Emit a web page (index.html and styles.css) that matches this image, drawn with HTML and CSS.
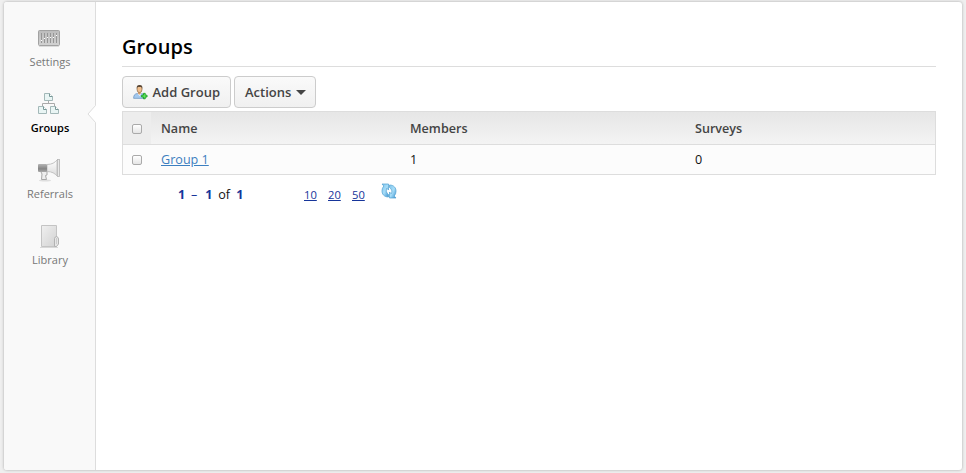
FILE: index.html
```html
<!DOCTYPE html>
<html lang="en">
<head>
<meta charset="utf-8">
<title>Groups</title>
<link rel="stylesheet" href="styles.css">
</head>
<body>
<div class="panel">
  <nav class="sidebar">
    <a class="nav-item">
      <svg width="24" height="24" viewBox="0 0 24 24">
        <defs><linearGradient id="g1" x1="0" y1="0" x2="0" y2="1"><stop offset="0" stop-color="#bcbcbc"/><stop offset="1" stop-color="#d2d2d2"/></linearGradient></defs>
        <rect x="1.500" y="4.500" width="21" height="15" rx="1" fill="url(#g1)" stroke="#a2a2a2"/>
        <path d="M2 20.500h20" stroke="#dcdcdc"/>
        <path d="M4.500 7v10M7.500 7v10M10.500 7v10M13.500 7v10M16.500 7v10M19.500 7v10" stroke="#969696"/>
        <path d="M4 14.500h1M7 12.500h1M10 11.500h1M13 11.500h1M16 11.500h1M19 9.500h1" stroke="#fff"/>
      </svg>
      <span>Settings</span>
    </a>
    <a class="nav-item active">
      <svg width="24" height="24" viewBox="0 0 24 24">
        <path d="M11.500 9v3M5.500 14.500v-3h12v3" fill="none" stroke="#aaa"/>
        <g fill="#e9f5f4" stroke="#a3b8b8">
          <path d="M7.500 1.500h5l3 3v4h-8zM1.500 14.500h5l3 3v4h-8zM13.500 14.500h5l3 3v4h-8z"/>
          <path d="M12.500 1.500v3h3M6.500 14.500v3h3M18.500 14.500v3h3" fill="#fff" stroke="#789898"/>
        </g>
      </svg>
      <span>Groups</span>
    </a>
    <a class="nav-item">
      <svg width="24" height="24" viewBox="0 0 24 24">
        <defs>
          <linearGradient id="g2" x1="0" y1="0" x2="0" y2="1"><stop offset="0" stop-color="#b5b5b5"/><stop offset=".6" stop-color="#858585"/><stop offset="1" stop-color="#aaa"/></linearGradient>
          <linearGradient id="g3" x1="0" y1="0" x2="0" y2="1"><stop offset="0" stop-color="#fff"/><stop offset="1" stop-color="#dadada"/></linearGradient>
        </defs>
        <ellipse cx="8" cy="22.500" rx="6" ry="1" fill="#dedede"/>
        <path d="M3.500 13l1.500 3-.5 5.500h5l-1-4 1.500-.5v-4z" fill="#eee" stroke="#a8a8a8"/>
        <path d="M10 6.500c5 0 8-2 10-4.500v16c-2-2.500-5-4.500-10-4.500z" fill="url(#g3)" stroke="#c2c2c2"/>
        <rect x="1" y="6" width="9" height="8" rx="1" fill="url(#g2)"/>
        <rect x="20.500" y="1.500" width="2" height="17" fill="#e8e8e8" stroke="#b5b5b5" stroke-width=".8"/>
      </svg>
      <span>Referrals</span>
    </a>
    <a class="nav-item">
      <svg width="24" height="24" viewBox="0 0 24 24">
        <defs><linearGradient id="g4" x1="0" y1="0" x2="1" y2="1"><stop offset="0" stop-color="#f0f0f0"/><stop offset="1" stop-color="#d2d2d2"/></linearGradient></defs>
        <path d="M3 23.500h18" stroke="#d8d8d8"/>
        <path d="M4.500 1.500h15v21h-15z" fill="url(#g4)" stroke="#c4c4c4"/>
        <path d="M17.500 22.500v-8q.5-2 2-2 2 .5 2 2.500v5l-2 2.500z" fill="#e6e6e6" stroke="#b2b2b2"/>
        <path d="M19.500 14v6" stroke="#ccc"/>
      </svg>
      <span>Library</span>
    </a>
    <svg class="notch" width="9" height="18" viewBox="0 0 9 18"><path d="M9 0L1 9l8 9z" fill="#fff"/><path d="M8.500.5L1 9l7.500 8.500" fill="none" stroke="#ddd"/></svg>
  </nav>
  <main class="content">
    <h1>Groups</h1>
    <div class="toolbar">
      <button class="btn add">
        <svg width="16" height="16" viewBox="0 0 16 16">
          <path d="M.7 15c0-3.500 1.300-5 4-5.300h5c2.300.5 3.300 2 3.300 5.300z" fill="#a3c8ee" stroke="#6590bf" stroke-width=".8"/>
          <path d="M5 9.500l2 3 2.500-3z" fill="#f5faff"/>
          <path d="M5.500 7.500h3V10L7 11 5.500 10z" fill="#dda16d"/>
          <ellipse cx="7.200" cy="4.800" rx="2.800" ry="3.900" fill="#f0be8c" stroke="#84613e" stroke-width=".7"/>
          <path d="M4.200 4.500C3.700 1.500 5 .4 7.300.4S10.800 1.500 10.200 4.500l-1-2H5z" fill="#5b4937"/>
          <path d="M11.500 9.500h2v2h2v2h-2v2h-2v-2h-2v-2h2z" fill="#5ee75b" stroke="#11981b" stroke-width=".9"/>
        </svg>
        <span>Add Group</span>
      </button>
      <button class="btn actions"><span>Actions</span><i class="caret"></i></button>
    </div>
    <table>
      <colgroup><col class="check"><col class="name"><col class="members"><col></colgroup>
      <thead><tr><th><i class="box"></i></th><th>Name</th><th>Members</th><th>Surveys</th></tr></thead>
      <tbody><tr><td><i class="box"></i></td><td><a>Group 1</a></td><td>1</td><td>0</td></tr></tbody>
    </table>
    <div class="pager">
      <div class="range"><b>1</b><em>–</em><b>1</b><span>of</span><b>1</b></div>
      <div class="sizes"><a>10</a><a>20</a><a>50</a></div>
      <svg class="refresh" width="16" height="16" viewBox="0 0 16 16">
        <defs><linearGradient id="g5" x1="0" y1="0" x2="1" y2="1"><stop offset="0" stop-color="#7fc6ed"/><stop offset=".5" stop-color="#a8ddf8"/><stop offset="1" stop-color="#3c94d0"/></linearGradient></defs>
        <path d="M1 1h6.500v6L5.800 5.300C4.500 7.500 5.500 10 7.500 11.500v2.500C3 14 .8 11 1 7.500Q1.100 5 2.800 3z" fill="url(#g5)" stroke="#4f9fd0" stroke-width=".7"/>
        <path d="M15 15H8.500V9l1.700 1.700C11.700 8.500 10.500 6 8.500 4.500V2C13 2 15.200 5 15 8.500q-.1 2.500-1.800 4.500z" fill="url(#g5)" stroke="#4f9fd0" stroke-width=".7"/>
      </svg>
    </div>
  </main>
</div>
</body>
</html>
```
FILE: styles.css
```css
* { box-sizing: border-box; }
body {
  margin: 0;
  padding: 2px 4px 3px;
  height: 473px;
  overflow: hidden;
  background: #efefef;
  font: 12.6px/18px "Open Sans", "Noto Sans", sans-serif;
  color: #111;
}
.panel {
  display: flex;
  height: 468px;
  background: #fff;
  border-radius: 3px;
  box-shadow: 0 0 3px rgba(0, 0, 0, .3);
}
.sidebar {
  position: relative;
  width: 92px;
  padding-top: 24px;
  background: #f9f9f9;
  border-right: 1px solid #ddd;
  border-radius: 3px 0 0 3px;
}
.nav-item {
  display: flex;
  flex-direction: column;
  align-items: center;
  height: 66px;
  font-size: 11px;
  line-height: 16px;
  color: #777;
}
.nav-item svg { margin-right: 2px; }
.nav-item span { margin-top: 4px; padding-left: 1px; }
.nav-item.active { color: #000; font-weight: 600; }
.notch { position: absolute; right: -1px; top: 103px; }
.content { flex: 1; padding: 32px 26px 0; }
h1 {
  margin: 0;
  height: 33px;
  border-bottom: 1px solid #ddd;
  font-size: 20px;
  line-height: 26px;
  font-weight: 600;
  letter-spacing: .1px;
  color: #000;
}
.toolbar { display: flex; gap: 3px; padding-top: 9px; height: 44px; }
.btn {
  display: flex;
  align-items: center;
  height: 32px;
  padding: 0 10px;
  border: 1px solid #ccc;
  border-radius: 4px;
  background: linear-gradient(#fafafa, #f0f0f0);
  font: 600 13px/18px "Open Sans", "Noto Sans", sans-serif;
  color: #444;
}
.add { width: 109px; gap: 4px; white-space: nowrap; }
.add span { margin-left: 1px; }
.actions { width: 82px; gap: 5px; }
.caret {
  border: 5px solid transparent;
  border-top: 5px solid #444;
  border-bottom: 0;
}
table {
  width: 100%;
  table-layout: fixed;
  border-collapse: separate;
  border-spacing: 0;
  border: 1px solid #ddd;
}
.check { width: 28px; }
.name { width: 249px; }
.members { width: 285px; }
th, td { padding: 0 0 0 10px; text-align: left; }
th { height: 33px; padding-top: 1px; border-bottom: 1px solid #ddd; font-weight: 600; color: #444; }
thead tr { background: linear-gradient(#e6e6e6, #f4f4f4); }
th:first-child { background: #ededed; }
td { height: 29px; background: #fcfcfc; }
th:first-child, td:first-child { padding-left: 9px; }
td a { color: #3c7fc0; text-decoration: underline; }
.box {
  display: block;
  width: 10px;
  height: 10px;
  border: 1px solid #aaa;
  border-radius: 2px;
  background: linear-gradient(#fff, #e5e5e5);
}
.pager { display: flex; padding: 11px 0 0 56px; }
.range { display: flex; width: 126px; }
.range b, .range em { color: #16359a; font-style: normal; }
.range b { width: 7px; font-weight: 700; }
.range em { margin: 0 8px 0 6px; }
.range span { margin: 0 6px; }
.sizes { display: flex; gap: 10px; width: 77px; font-size: 11.2px; line-height: 18px; }
.sizes a { width: 14px; color: #16359a; text-decoration: underline; }
.refresh { margin-top: -3px; }
```
